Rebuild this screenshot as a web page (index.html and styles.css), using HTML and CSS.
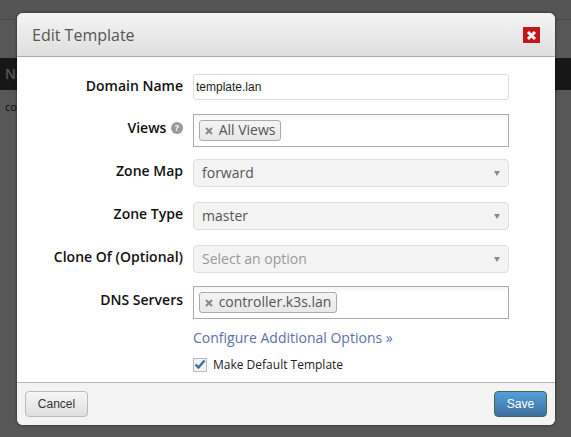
FILE: index.html
```html
<!DOCTYPE html>
<html lang="en">
<head>
    <meta charset="UTF-8">
    <meta name="viewport" content="width=device-width, initial-scale=1.0">
    <title>Edit Template</title>
    <link rel="stylesheet" href="styles.css">
</head>
<body>
    <div class="page">
        <div class="page-nav"></div>
        <div class="page-tablehead">Name</div>
        <div class="page-row">controller.k3s.lan</div>
    </div>
    <div class="overlay"></div>
    <div class="modal">
        <div class="modal-header">
            <h3>Edit Template</h3>
            <button class="close-btn" type="button" aria-label="Close">
                <svg width="11" height="11" viewBox="0 0 11 11"><path d="M2 2l7 7M9 2l-7 7" stroke="#fff" stroke-width="3" fill="none"/></svg>
            </button>
        </div>
        <form class="modal-body">
            <div class="row row-input">
                <label>Domain Name</label>
                <input class="text-input" type="text" value="template.lan">
            </div>
            <div class="row row-multi">
                <label>Views
                    <svg class="help" width="12" height="12" viewBox="0 0 12 12"><circle cx="6" cy="6" r="6" fill="#999"/><text x="6" y="9.4" text-anchor="middle" class="help-mark">?</text></svg>
                </label>
                <div class="multi">
                    <span class="chip">
                        <svg class="chip-x" width="8" height="8" viewBox="0 0 8 8"><path d="M1 1l6 6M7 1l-6 6" stroke="#888" stroke-width="2" fill="none"/></svg>
                        All Views
                    </span>
                </div>
            </div>
            <div class="row row-select">
                <label>Zone Map</label>
                <div class="select"><span>forward</span><i class="arrow"></i></div>
            </div>
            <div class="row row-select">
                <label>Zone Type</label>
                <div class="select"><span>master</span><i class="arrow"></i></div>
            </div>
            <div class="row row-select row-select-last">
                <label>Clone Of (Optional)</label>
                <div class="select placeholder"><span>Select an option</span><i class="arrow"></i></div>
            </div>
            <div class="row row-multi row-dns">
                <label>DNS Servers</label>
                <div class="multi">
                    <span class="chip">
                        <svg class="chip-x" width="8" height="8" viewBox="0 0 8 8"><path d="M1 1l6 6M7 1l-6 6" stroke="#888" stroke-width="2" fill="none"/></svg>
                        controller.k3s.lan
                    </span>
                </div>
            </div>
            <a class="more-link" href="#">Configure Additional Options »</a>
            <div class="check-line">
                <span class="checkbox">
                    <svg width="12" height="11" viewBox="0 0 12 11"><path d="M1.5 5.5l3 3 6-7" stroke="#3f6fa5" stroke-width="2.4" fill="none"/></svg>
                </span>
                <span>Make Default Template</span>
            </div>
        </form>
        <div class="modal-footer">
            <button class="btn" type="button">Cancel</button>
            <button class="btn btn-primary" type="button">Save</button>
        </div>
    </div>
</body>
</html>
```

FILE: styles.css
```css
html, body {
    margin: 0;
    padding: 0;
    height: 437px;
    overflow: hidden;
}
body {
    font-family: 'Open Sans', sans-serif;
    background-color: #fff;
    color: #222;
}
.page-nav {
    height: 19px;
    background-color: #f8f8f8;
    border-bottom: 1px solid #ddd;
    margin-bottom: 38px;
}
.page-tablehead {
    height: 32px;
    line-height: 32px;
    padding-left: 5px;
    background-color: #444;
    color: #fff;
    font-size: 14px;
    font-weight: 600;
}
.page-row {
    padding: 8px 5px;
    font-size: 11px;
    line-height: 18px;
    background-color: #fff;
}
.overlay {
    position: absolute;
    top: 0;
    left: 0;
    width: 571px;
    height: 437px;
    background-color: rgba(0, 0, 0, 0.66);
}
.modal {
    position: absolute;
    top: 13px;
    left: 17px;
    width: 538px;
    height: 412px;
    display: flex;
    flex-direction: column;
    background-color: #fff;
    border-radius: 6px;
    box-shadow: 0 0 3px rgba(0, 0, 0, 0.6);
    overflow: hidden;
}
.modal-header {
    height: 43px;
    flex: none;
    display: flex;
    align-items: center;
    justify-content: space-between;
    padding: 0 15px;
    background: linear-gradient(#f5f5f5, #dedede);
    border-bottom: 1px solid #aaa;
}
.modal-header h3 {
    margin: 0;
    font-size: 16px;
    font-weight: 400;
    color: #555;
}
.close-btn {
    width: 17px;
    height: 16px;
    padding: 0;
    display: flex;
    align-items: center;
    justify-content: center;
    background-color: #c4161c;
    border: none;
    margin-top: 1px;
}
.modal-body {
    flex: 1;
    padding-top: 17px;
}
.row {
    display: flex;
    align-items: center;
    gap: 10px;
    margin-bottom: 14px;
}
.row label {
    width: 166px;
    text-align: right;
    font-size: 14px;
    font-weight: 600;
    color: #111;
    margin-top: -3px;
}
.help {
    vertical-align: -1px;
    margin-left: 1px;
}
.help-mark {
    font-size: 9px;
    font-weight: 700;
    fill: #fff;
}
.text-input {
    width: 316px;
    height: 26px;
    box-sizing: border-box;
    padding: 0 2px;
    font-family: 'Liberation Sans', sans-serif;
    font-size: 12px;
    color: #222;
    border: 1px solid #ddd;
    border-radius: 3px;
    outline: none;
}
.multi {
    width: 316px;
    height: 33px;
    box-sizing: border-box;
    padding: 3px 5px;
    border: 1px solid #aaa;
    background: linear-gradient(#f4f4f4, #fff 6px);
}
.chip {
    display: inline-block;
    height: 21px;
    line-height: 18px;
    box-sizing: border-box;
    padding: 0 5px;
    font-size: 14px;
    color: #555;
    background: linear-gradient(#f4f4f4, #e8e8e8);
    border: 1px solid #aaa;
    border-radius: 3px;
}
.chip-x {
    margin-right: 2px;
}
.select {
    width: 316px;
    height: 28px;
    box-sizing: border-box;
    display: flex;
    align-items: center;
    justify-content: space-between;
    padding: 0 8px 2px;
    font-size: 14px;
    color: #555;
    background-color: #f3f3f3;
    border: 1px solid #ddd;
    border-radius: 4px;
}
.select.placeholder {
    color: #999;
}
.arrow {
    width: 0;
    height: 0;
    margin-top: 2px;
    border-left: 3px solid transparent;
    border-right: 3px solid transparent;
    border-top: 5px solid #888;
}
.row-select {
    margin-bottom: 15px;
}
.row-select label {
    margin-top: -5px;
}
.row-select-last {
    margin-bottom: 13px;
}
.row-multi {
    margin-bottom: 12px;
}
.row-multi label {
    margin-top: -7px;
}
.row-dns {
    margin-bottom: 9px;
}
.more-link {
    display: block;
    margin: 0 0 0 176px;
    font-size: 14px;
    line-height: 19px;
    color: #5b6fa8;
    text-decoration: none;
}
.check-line {
    display: flex;
    align-items: center;
    gap: 6px;
    margin: 9px 0 0 176px;
    font-size: 12px;
    color: #222;
}
.checkbox {
    width: 12px;
    height: 12px;
    display: flex;
    align-items: center;
    justify-content: center;
    border: 1px solid #bbb;
    background-color: #f4f4f4;
}
.modal-footer {
    height: 42px;
    flex: none;
    display: flex;
    align-items: center;
    justify-content: space-between;
    padding: 0 8px;
    background-color: #f3f3f3;
    border-top: 1px solid #bbb;
}
.btn {
    height: 26px;
    width: 63px;
    padding: 0;
    font-family: 'Liberation Sans', sans-serif;
    font-size: 12px;
    color: #333;
    background: linear-gradient(#f6f6f6, #dfdfdf);
    border: 1px solid #bbb;
    border-radius: 4px;
}
.btn-primary {
    width: 53px;
    color: #fff;
    background: linear-gradient(#54a0da, #3e6f9f);
    border-color: #3d6b50;
}
```
